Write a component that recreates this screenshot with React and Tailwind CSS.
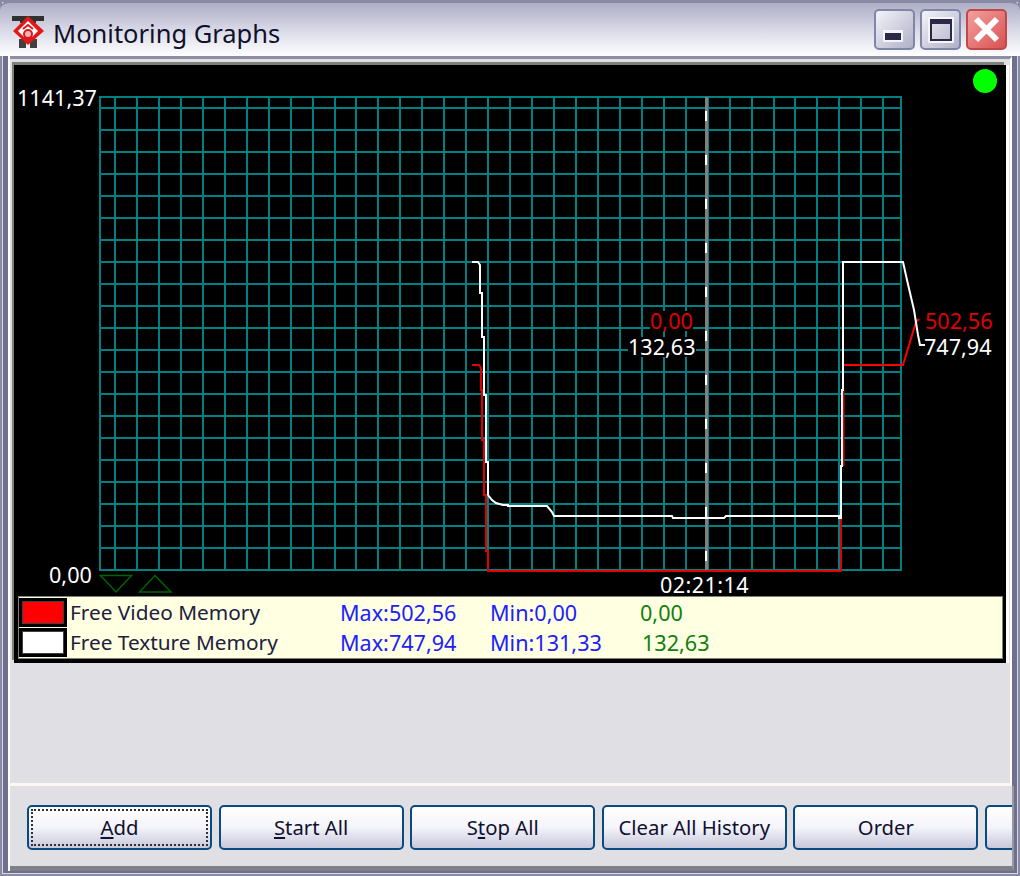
const FONT = "font-['Noto_Sans',sans-serif]";

const vx = Array.from({ length: 36 }, (_, i) => 115 + i * 21.95);
const hy = Array.from({ length: 22 }, (_, i) => 108 + i * 22);

function Chart() {
  return (
    <svg className="absolute left-0 top-0" width="992" height="598" viewBox="14 65 992 598" shapeRendering="crispEdges">
      <g stroke="#008080" strokeWidth="2" fill="none">
        <rect x="100" y="97" width="801" height="473" />
        {vx.map((x) => (<line key={x} x1={Math.round(x)} y1="97" x2={Math.round(x)} y2="570" />))}
        {hy.map((y) => (<line key={y} x1="100" y1={y} x2="901" y2={y} />))}
      </g>
      <line x1="706" y1="97" x2="706" y2="571" stroke="#808080" strokeWidth="3" />
      <line x1="706" y1="97" x2="706" y2="571" stroke="#ffffff" strokeWidth="2" strokeDasharray="10 34" strokeDashoffset="-14" />
      <g fill="none" strokeWidth="2" shapeRendering="auto">
        <path d="M472 365H479L481 368V390H482V440H484V495H486V551H488V571H841V519" stroke="#e00000" />
        <path d="M844 365H903L916 322L919 319" stroke="#ff0000" />
        <path d="M843 390V466" stroke="#e80000" strokeWidth="3" />
        <path d="M472 262H478L480 265V293H482V337H484V395H486V462H488V495L492 500L496 503L503 505H508V506H547L552 512L554 516H672L673 518H724L726 516H839V518H841V466H842V390H843V262H903L907 280L914 310L918 335L920 345H925" stroke="#ffffff" />
      </g>
      <path d="M100.500 575.500H131.500L116 592Z" fill="none" stroke="#006400" strokeWidth="1.500" shapeRendering="auto" />
      <path d="M139.500 592H171L155 575.500Z" fill="none" stroke="#006400" strokeWidth="1.500" shapeRendering="auto" />
      <circle cx="985" cy="81" r="12" fill="#00ff00" shapeRendering="auto" />
    </svg>
  );
}

function ChartLabel({ className, children }) {
  return <span className={`absolute text-[21.600px] leading-[20px] whitespace-nowrap ${className}`}>{children}</span>;
}

function LegendRow({ color, name, max, min, cur, curClass }) {
  return (
    <div className="flex items-center h-[30px]">
      <div className="w-[48px] h-[29px] border-[3px] border-black flex items-stretch bg-black">
        <div className="flex-1 border border-[#404040]" style={{ backgroundColor: color }} />
      </div>
      <span className="w-[273px] pl-[3px] text-[20.800px] text-[#202040] whitespace-nowrap">{name}</span>
      <span className="w-[150px] text-[#2020ff] whitespace-nowrap">{max}</span>
      <span className="w-[150px] text-[#2020ff] whitespace-nowrap">{min}</span>
      <span className={`text-[#108010] whitespace-nowrap ${curClass}`}>{cur}</span>
    </div>
  );
}

function Btn({ children, focus }) {
  return (
    <button className="relative w-[185px] h-[45px] shrink-0 rounded-[5px] border-2 border-[#0a4a80] bg-gradient-to-b from-white via-[#f4f4fa] to-[#c8c8dc] text-[20.300px] text-[#101030] flex items-center justify-center">
      {focus && <span className="absolute inset-[2px] border-2 border-dotted border-[#303030]" />}
      {children}
    </button>
  );
}

export default function App() {
  return (
    <div className={`${FONT} w-[1020px] h-[876px] relative overflow-hidden bg-[#6f6f90] pl-[8px] pr-[6px] pb-[5px] flex flex-col shadow-[inset_0_0_0_2px_#8a8aa4,inset_0_0_0_3px_#d8d8e4]`}>
      <div className="-ml-[8px] -mr-[6px] h-[56px] shrink-0 rounded-t-[10px] border-t-[3px] border-[#8a8aa4] bg-gradient-to-b from-[#aeaec6] via-[#d8d8e6] to-white flex items-center pl-[12px]">
        <svg width="32" height="33" viewBox="0 0 32 33" className="shrink-0 mt-[3px]">
          <path d="M0 1H32V6H24V8H8V6H0Z" fill="#303030" />
          <path d="M7 24H14V33H7ZM18 24H25V33H18Z" fill="#404040" />
          <path d="M16 1L32 16L16 30L1 16Z" fill="#e01818" />
          <path d="M16 6L26 16L20 22H12L6 16Z" fill="#ffffff" />
          <circle cx="16" cy="19" r="4" fill="#ffb0b0" stroke="#d02020" strokeWidth="2" />
          <path d="M11 14L16 10L21 14" fill="none" stroke="#e01818" strokeWidth="2" />
        </svg>
        <span className="ml-[9px] text-[25.500px] leading-none text-[#10102a] mt-[8px]">Monitoring Graphs</span>
        <div className="ml-auto flex gap-[5px] pr-[13px]">
          <div className="w-[41px] h-[41px] rounded-[5px] border-2 border-[#7f86a8] bg-gradient-to-br from-[#f4f4fa] to-[#b0b0c8] relative">
            <span className="absolute left-[7px] bottom-[6px] w-[16px] h-[7px] bg-[#2a2a48] border-2 border-t-[3px] border-[#f4f4fa] box-content" />
          </div>
          <div className="w-[41px] h-[41px] rounded-[5px] border-2 border-[#7f86a8] bg-gradient-to-br from-[#f4f4fa] to-[#b0b0c8] relative">
            <span className="absolute left-[8px] top-[8px] w-[22px] h-[22px] border-2 border-t-[5px] border-[#2a2a48] outline-2 outline-[#f4f4fa]" />
          </div>
          <div className="w-[41px] h-[41px] rounded-[5px] border-2 border-[#c04848] bg-gradient-to-br from-[#f0a0a0] to-[#d85050] flex items-center justify-center">
            <svg width="27" height="27" viewBox="0 0 27 27">
              <path d="M3 3L24 24M24 3L3 24" stroke="#ffffff" strokeWidth="6" />
            </svg>
          </div>
        </div>
      </div>

      <div className="flex-1 flex flex-col border-l-2 border-white">
        <div className="h-[730px] shrink-0 mr-[2px] bg-[#e0dfe3] border-t-[3px] border-[#8f8fa4] border-r-2 border-r-white pl-[4px] pr-[4px] pt-[6px] flex flex-col border-b-[3px] border-b-[#faf8f0]">
          <div className="relative h-[598px] shrink-0 bg-black shadow-[-2px_-3px_0_#808078,3px_0_0_#ffffff]">
            <Chart />
            <ChartLabel className="left-[3px] top-[23px] text-white">1141,37</ChartLabel>
            <ChartLabel className="left-[35px] top-[500px] text-white">0,00</ChartLabel>
            <ChartLabel className="left-[636px] top-[246px] text-[#e00000] bg-black">0,00</ChartLabel>
            <ChartLabel className="left-[614px] top-[272px] text-white bg-black">132,63</ChartLabel>
            <ChartLabel className="left-[911px] top-[246px] text-[#e00000]">502,56</ChartLabel>
            <ChartLabel className="left-[910px] top-[272px] text-white">747,94</ChartLabel>
            <ChartLabel className="left-[646px] top-[510px] text-white tracking-[0.400px]">02:21:14</ChartLabel>
            <div className="absolute left-[4px] top-[531px] w-[985px] h-[63px] bg-[#ffffe1] border border-[#808078] text-[21.600px] leading-none flex flex-col justify-center">
              <LegendRow color="#ff0000" name="Free Video Memory" max="Max:502,56" min="Min:0,00" cur="0,00" />
              <LegendRow color="#ffffff" name="Free Texture Memory" max="Max:747,94" min="Min:131,33" cur="132,63" curClass="ml-[2px]" />
            </div>
          </div>
        </div>
        <div className="flex-1 flex gap-[6.600px] pl-[17px] pt-[19px] overflow-hidden bg-[#e0dfe3] border-r-2 border-r-[#98989c] border-b-[5px] border-b-[#808088]">
          <Btn focus><span><u>A</u>dd</span></Btn>
          <Btn><span><u>S</u>tart All</span></Btn>
          <Btn><span>S<u>t</u>op All</span></Btn>
          <Btn>Clear All History</Btn>
          <Btn>Order</Btn>
          <Btn>{""}</Btn>
        </div>
      </div>
    </div>
  );
}
